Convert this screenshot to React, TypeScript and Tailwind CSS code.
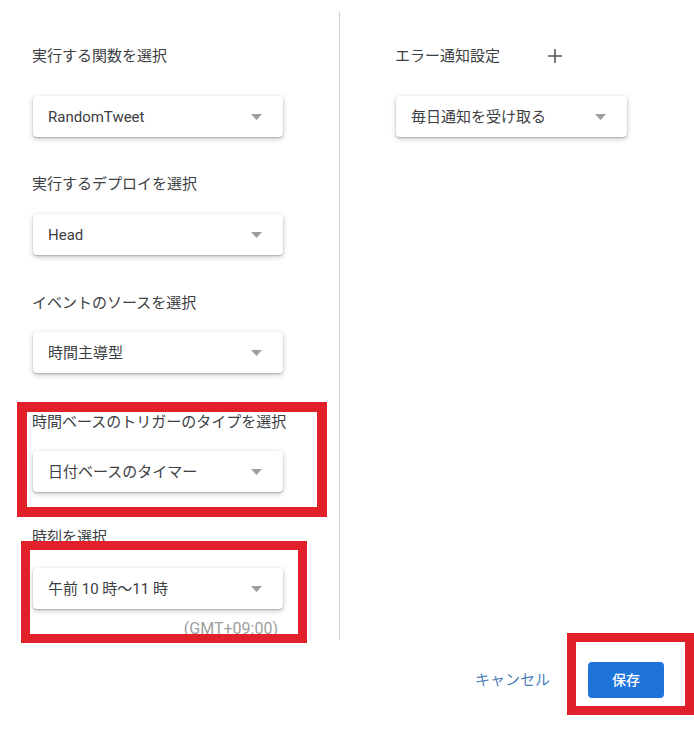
import React from "react";

const font = { fontFamily: 'Roboto, "Noto Sans CJK JP", sans-serif' };

function Arrow() {
  return (
    <svg width="11" height="6" viewBox="0 0 11 6" className="shrink-0">
      <path d="M0 0 L11 0 L5.5 6 Z" fill="#9e9e9e" />
    </svg>
  );
}

function Select({ value, w = "w-[250px]" }: { value: string; w?: string }) {
  return (
    <div
      className={`${w} h-[41px] bg-white rounded-[4px] flex items-center justify-between pl-[15px] pr-[21px] shadow-[0_1px_2px_rgba(0,0,0,0.25),0_2px_6px_rgba(0,0,0,0.18)]`}
    >
      <span className="text-[15px] text-[#3c4043] leading-[20px]">{value}</span>
      <Arrow />
    </div>
  );
}

function Label({ children, className = "" }: { children: React.ReactNode; className?: string }) {
  return <div className={`text-[15px] leading-[20px] text-[#3c4043] ${className}`}>{children}</div>;
}

export default function App() {
  return (
    <div className="relative w-[694px] h-[732px] bg-white overflow-hidden" style={font}>
      <div className="flex mt-[12px] h-[628px]">
        <div className="w-[340px] border-r border-[#cfcfcf] pl-[33px] pt-[34px] flex flex-col">
          <Label className="-ml-[1px]">実行する関数を選択</Label>
          <div className="mt-[30px]"><Select value="RandomTweet" /></div>
          <Label className="mt-[37px] -ml-[1px]">実行するデプロイを選択</Label>
          <div className="mt-[20px]"><Select value="Head" /></div>
          <Label className="mt-[38px] -ml-[1px]">イベントのソースを選択</Label>
          <div className="mt-[19px]"><Select value="時間主導型" /></div>
          <Label className="mt-[39px] -ml-[1px]">時間ベースのトリガーのタイプを選択</Label>
          <div className="mt-[19px]"><Select value="日付ベースのタイマー" /></div>
          <Label className="mt-[35px] -ml-[1px]">時刻を選択</Label>
          <div className="mt-[21px]"><Select value="午前 10 時～11 時" /></div>
          <div className="mt-[10px] w-[250px] text-right pr-[5px] text-[16px] leading-[20px] text-[#9e9e9e]">
            (GMT+09:00)
          </div>
        </div>
        <div className="flex-1 pl-[55px] pt-[34px] flex flex-col">
          <div className="flex items-center">
            <Label>エラー通知設定</Label>
            <svg width="14" height="14" viewBox="0 0 14 14" className="ml-[48px]">
              <path d="M7 0 V14 M0 7 H14" stroke="#555" strokeWidth="1.6" />
            </svg>
          </div>
          <div className="mt-[30px] ml-[1px]"><Select value="毎日通知を受け取る" w="w-[231px]" /></div>
        </div>
      </div>
      <div className="flex justify-end items-center pr-[30px] mt-[22px]">
        <span className="text-[15px] text-[#5080b8]">キャンセル</span>
        <button className="ml-[38px] w-[76px] h-[36px] rounded-[4px] bg-[#1f74dc] text-white text-[14px] font-medium">
          保存
        </button>
      </div>

      {/* red annotation boxes */}
      <div className="absolute left-[17px] top-[402px] w-[310px] h-[115px] border-[10px] border-[#e2202a]" />
      <div className="absolute left-[21px] top-[541px] w-[286px] h-[102px] border-[9px] border-[#e2202a]" />
      <div className="absolute left-[567px] top-[633px] w-[127px] h-[82px] border-[9px] border-[#e2202a]" />
    </div>
  );
}
